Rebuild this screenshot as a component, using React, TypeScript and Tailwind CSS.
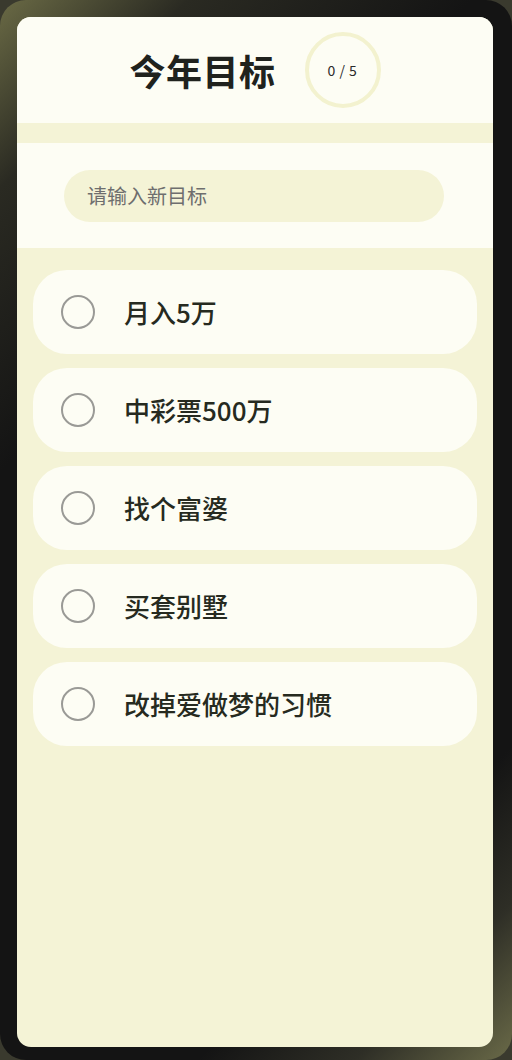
import React from "react";

const goals = ["月入5万", "中彩票500万", "找个富婆", "买套别墅", "改掉爱做梦的习惯"];

export default function App() {
  return (
    <div
      className="w-[512px] h-[1060px] bg-[#3a3a2e]"
      style={{ fontFamily: '"Noto Sans CJK SC", "Noto Sans", sans-serif' }}
    >
      <div className="h-full rounded-[26px] pt-[17px] pl-[17px] pr-[19px] pb-[13px] bg-[linear-gradient(135deg,#6a6a45_0%,#2a2a22_12%,#141414_30%,#141414_80%,#2e2e26_90%,#6a6a48_100%)]">
        <div className="h-full rounded-[14px] overflow-hidden bg-[#f4f3d6] flex flex-col">
          <div className="h-[106px] shrink-0 bg-[#fdfdf4] flex items-center justify-center gap-[29px]">
            <h1 className="text-[36px] font-bold leading-none text-[#20221d] tracking-[0.5px]">今年目标</h1>
            <div className="w-[76px] h-[76px] rounded-full border-4 border-[#f3f2cf] flex items-center justify-center text-[14px] text-[#2a2a2a] tracking-[0.5px]">
              0 / 5
            </div>
          </div>
          <div className="h-[20px] shrink-0" />
          <div className="h-[105px] shrink-0 bg-[#fdfdf4] flex items-center pl-[47px] pr-[49px]">
            <input
              className="w-full h-[52px] rounded-full bg-[#f4f3d6] pl-[23px] text-[20px] outline-none placeholder:text-[#6e6e6e] text-[#333]"
              placeholder="请输入新目标"
            />
          </div>
          <div className="flex flex-col gap-[14px] px-4 pt-[22px]">
            {goals.map((g) => (
              <div key={g} className="h-[84px] rounded-[34px] bg-[#fdfdf4] flex items-center pl-[28px]">
                <div className="w-[34px] h-[34px] rounded-full border-2 border-[#9a9a96] shrink-0" />
                <span className="ml-[29px] text-[26px] font-medium leading-none text-[#262a20]">{g}</span>
              </div>
            ))}
          </div>
        </div>
      </div>
    </div>
  );
}
